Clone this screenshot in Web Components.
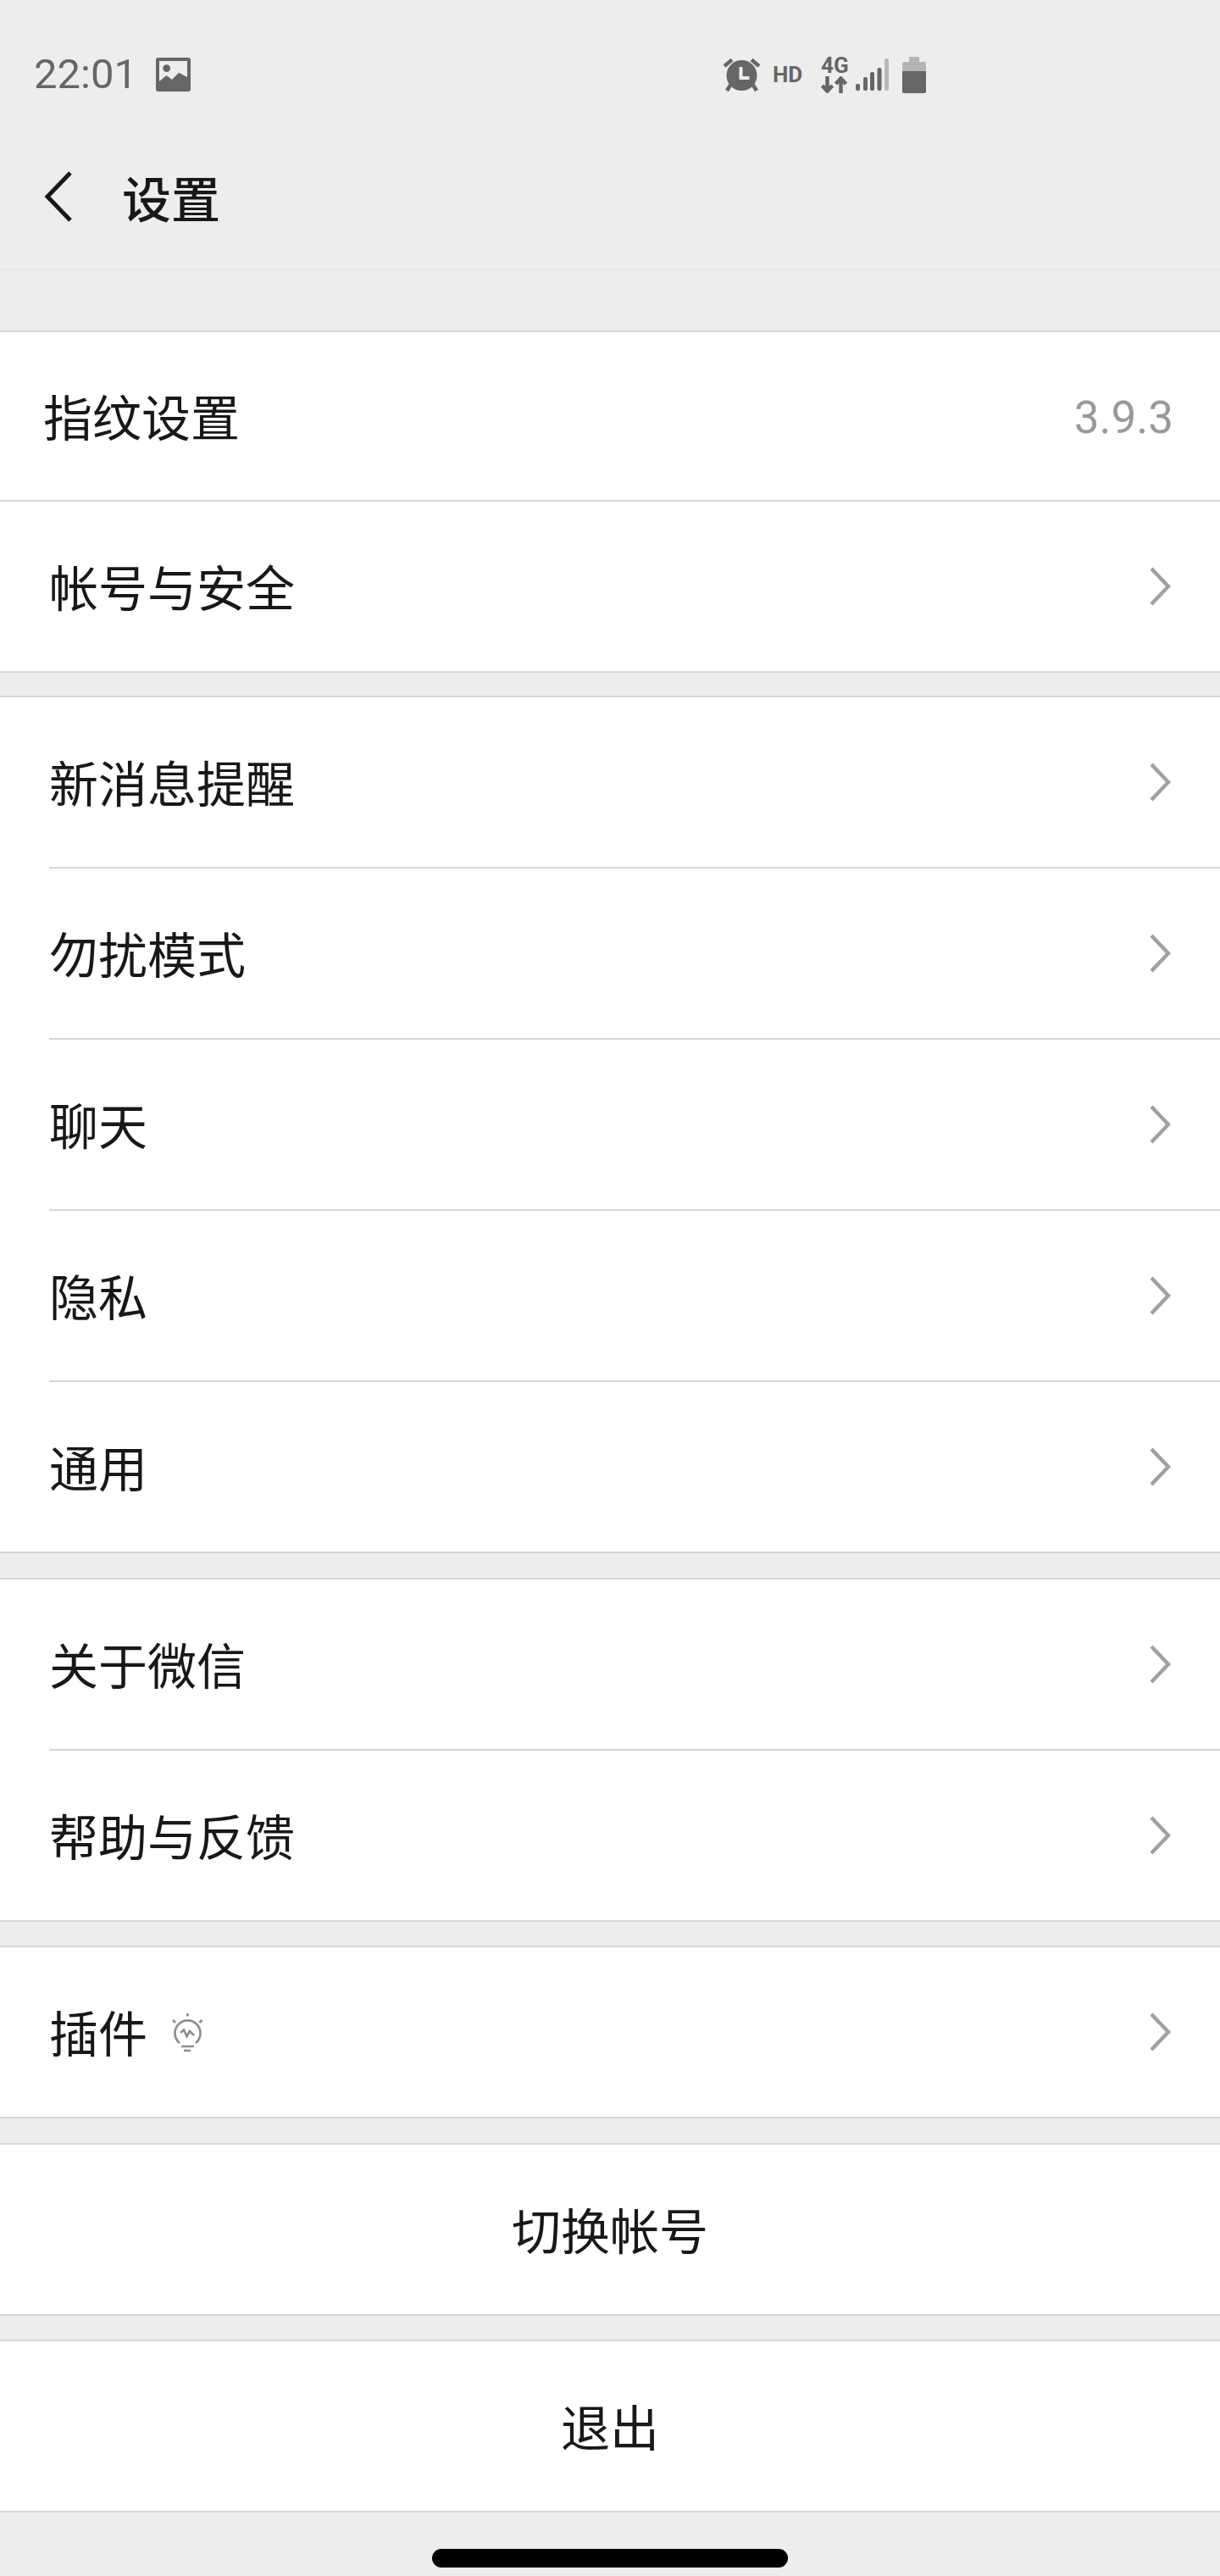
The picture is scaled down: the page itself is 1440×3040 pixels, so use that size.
<!DOCTYPE html>
<html>
<head>
<meta charset="utf-8">
<title>设置</title>
<style>
    html, body{
        margin: 0;
        padding: 0;
        background: #ededed;
    }
    body{
        height: 3040px;
        overflow: hidden;
        font-family: "Noto Sans CJK SC", "Noto Sans", sans-serif;
    }
</style>
</head>
<body>
    <status-bar></status-bar>
    <app-header title="设置"></app-header>

    <settings-group gap="71">
        <settings-row first>指纹设置<span slot="value">3.9.3</span></settings-row>
        <settings-row chevron>帐号与安全</settings-row>
    </settings-group>

    <settings-group gap="27">
        <settings-row inset chevron>新消息提醒</settings-row>
        <settings-row inset chevron>勿扰模式</settings-row>
        <settings-row inset chevron>聊天</settings-row>
        <settings-row inset chevron>隐私</settings-row>
        <settings-row chevron>通用</settings-row>
    </settings-group>

    <settings-group>
        <settings-row inset chevron>关于微信</settings-row>
        <settings-row chevron>帮助与反馈</settings-row>
    </settings-group>

    <settings-group>
        <settings-row chevron>插件<bulb-icon slot="extra"></bulb-icon></settings-row>
    </settings-group>

    <settings-group>
        <settings-row center>切换帐号</settings-row>
    </settings-group>

    <settings-group>
        <settings-row center>退出</settings-row>
    </settings-group>

    <home-bar></home-bar>

<script>
class StatusBar extends HTMLElement{
    constructor(){
        super();
        this.attachShadow({ mode: "open" })
    }
    connectedCallback(){
        this.shadowRoot.innerHTML = `
        <style>
            :host{
                display: flex;
                align-items: center;
                height: 116px;
                padding: 30px 0 0 40px;
                color: #666;
                font-family: Roboto, "Liberation Sans", sans-serif;
            }
            .time{
                font-size: 49px;
                line-height: 60px;
                width: 117px;
            }
            svg{
                display: block;
                flex: none;
            }
            .photo{
                margin-left: 27px;
            }
            .icons{
                display: flex;
                align-items: center;
                margin-left: 628px;
            }
            .hd{
                margin-left: 14px;
                width: 36px;
                font-size: 26px;
                font-weight: 700;
                line-height: 28px;
            }
            .net{
                display: flex;
                flex-direction: column;
                align-items: flex-start;
                gap: 2px;
                margin-left: 21px;
                width: 33px;
            }
            .net span{
                font-size: 26px;
                font-weight: 700;
                line-height: 22px;
            }
            .signal{
                margin-left: 8px;
            }
            .battery{
                margin-left: 16px;
            }
        </style>
        <span class="time">22:01</span>
        <svg class="photo" width="41" height="40" viewBox="0 0 41 40">
            <path fill="#666" fill-rule="evenodd" d="M3 0h35a3 3 0 0 1 3 3v34a3 3 0 0 1-3 3H3a3 3 0 0 1-3-3V3a3 3 0 0 1 3-3zM4 4v24l8.500-7 6.500 5 8-8.300 10 5.300V4z"/>
            <circle cx="12.700" cy="12.700" r="4.400" fill="#666"/>
        </svg>
        <div class="icons">
            <svg width="45" height="42" viewBox="0 0 45 42">
                <g stroke="#666" stroke-width="4.500" fill="none">
                    <path d="M2 11 11 3.500M43 11 34 3.500"/>
                    <path d="M10 32 5 40M35 32 40 40"/>
                </g>
                <circle cx="22.500" cy="22" r="18" fill="#666"/>
                <path d="M21.500 12v13h10" fill="none" stroke="#ededed" stroke-width="4"/>
            </svg>
            <span class="hd">HD</span>
            <div class="net">
                <span>4G</span>
                <svg width="32" height="20" viewBox="0 0 32 20">
                    <path d="M7.500 0v17M1.500 11l6 6.500 6-6.500M23.500 20V3M17.500 9l6-6.500 6 6.500" fill="none" stroke="#666" stroke-width="4.500"/>
                </svg>
            </div>
            <svg class="signal" width="39" height="38" viewBox="0 0 39 38">
                <g fill="#666">
                    <rect x="0" y="30" width="5" height="8" rx="2"/>
                    <rect x="9" y="22" width="5" height="16" rx="2"/>
                    <rect x="17" y="16" width="5" height="22" rx="2"/>
                    <rect x="25.500" y="11" width="5" height="27" rx="2"/>
                </g>
                <rect x="34" y="0" width="5" height="38" rx="2" fill="#b8b8b8"/>
            </svg>
            <svg class="battery" width="28" height="43" viewBox="0 0 28 43">
                <path fill="#b5b5b5" d="M8 0h12v6h6a2 2 0 0 1 2 2v11H0V8a2 2 0 0 1 2-2h6z"/>
                <path fill="#666" d="M0 17h28v24a2 2 0 0 1-2 2H2a2 2 0 0 1-2-2z"/>
            </svg>
        </div>
        `
    }
}

class AppHeader extends HTMLElement{
    constructor(){
        super();
        this.attachShadow({ mode: "open" })
    }
    connectedCallback(){
        this.shadowRoot.innerHTML = `
        <style>
            :host{
                display: flex;
                align-items: center;
                box-sizing: border-box;
                height: 173px;
                padding-left: 52px;
                border-bottom: 2px solid #e6e6e6;
            }
            svg{
                display: block;
                flex: none;
            }
            h1{
                margin: 0 0 0 58px;
                font-size: 58px;
                font-weight: 500;
                line-height: 72px;
                color: #181818;
            }
        </style>
        <svg width="34" height="62" viewBox="0 0 34 62">
            <path d="M31 3 4 31l27 28" fill="none" stroke="#181818" stroke-width="5"/>
        </svg>
        <h1>${this.getAttribute("title")}</h1>
        `
    }
}

class SettingsGroup extends HTMLElement{
    constructor(){
        super();
        this.attachShadow({ mode: "open" })
    }
    connectedCallback(){
        const gap = this.getAttribute("gap") || "28.5"
        this.shadowRoot.innerHTML = `
        <style>
            :host{
                display: block;
                margin-top: ${gap}px;
                background: #fff;
                border-top: 2px solid #d6d6d6;
            }
        </style>
        <slot></slot>
        `
    }
}

class SettingsRow extends HTMLElement{
    constructor(){
        super();
        this.attachShadow({ mode: "open" })
    }
    connectedCallback(){
        const chevron = this.hasAttribute("chevron") ? `
            <svg class="chevron" width="26" height="48" viewBox="0 0 26 48">
                <path d="M3 3l20 21L3 45" fill="none" stroke="#a0a0a0" stroke-width="4.500"/>
            </svg>` : ""
        this.shadowRoot.innerHTML = `
        <style>
            :host{
                display: block;
                height: 202px;
                font-size: 58px;
                color: #181818;
            }
            :host([first]){
                height: 200px;
            }
            .line{
                display: flex;
                align-items: center;
                box-sizing: border-box;
                height: 100%;
                padding-left: 58px;
                border-bottom: 2px solid #d6d6d6;
            }
            :host([inset]) .line{
                margin-left: 58px;
                padding-left: 0;
            }
            :host([first]) .line{
                padding-left: 51px;
            }
            :host([center]) .line{
                justify-content: center;
                padding: 0;
            }
            .label{
                line-height: 80px;
                padding-bottom: 2px;
            }
            .extra{
                display: flex;
                margin-left: 28px;
            }
            .end{
                display: flex;
                align-items: center;
                margin-left: auto;
                margin-right: 55px;
            }
            :host([center]) .extra,
            :host([center]) .end{
                display: none;
            }
            ::slotted([slot=value]){
                font-family: Roboto, "Liberation Sans", sans-serif;
                font-size: 53px;
                padding-top: 3px;
                color: #999;
            }
            .chevron{
                display: block;
                margin-right: 3px;
            }
        </style>
        <div class="line">
            <span class="label"><slot></slot></span>
            <span class="extra"><slot name="extra"></slot></span>
            <span class="end"><slot name="value"></slot>${chevron}</span>
        </div>
        `
    }
}

class BulbIcon extends HTMLElement{
    constructor(){
        super();
        this.attachShadow({ mode: "open" })
    }
    connectedCallback(){
        this.shadowRoot.innerHTML = `
        <style>
            :host{
                display: block;
                width: 39px;
                height: 47px;
            }
            svg{
                display: block;
            }
        </style>
        <svg width="39" height="47" viewBox="0 0 39 47">
            <g fill="none" stroke="#8e8e8e" stroke-width="2.700">
                <path d="M19.300 1v3.500M2 9l3 3M36.500 9l-3 3"/>
                <path d="M10 36A15 15 0 1 1 29 36"/>
                <path d="M11 24l4-3.500 3.500 7.500 3.500-6 5 5"/>
                <path d="M12 40h15M15 45h8"/>
            </g>
        </svg>
        `
    }
}

class HomeBar extends HTMLElement{
    constructor(){
        super();
        this.attachShadow({ mode: "open" })
    }
    connectedCallback(){
        this.shadowRoot.innerHTML = `
        <style>
            :host{
                display: flex;
                justify-content: center;
                padding-top: 43px;
            }
            div{
                width: 420px;
                height: 22px;
                border-radius: 11px;
                background: #000;
            }
        </style>
        <div></div>
        `
    }
}

customElements.define("status-bar", StatusBar)
customElements.define("app-header", AppHeader)
customElements.define("settings-group", SettingsGroup)
customElements.define("settings-row", SettingsRow)
customElements.define("bulb-icon", BulbIcon)
customElements.define("home-bar", HomeBar)
</script>
</body>
</html>
